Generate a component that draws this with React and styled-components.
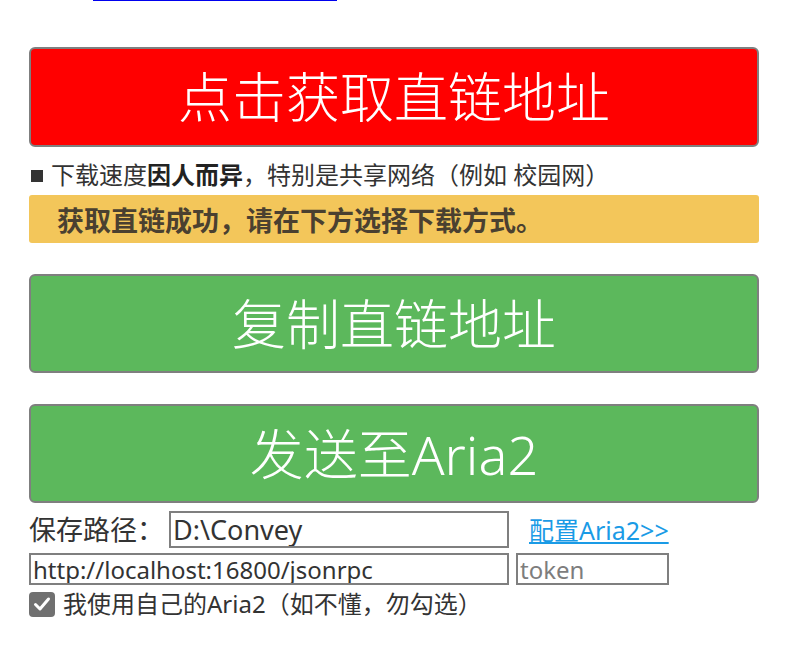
import React from "react";
import styled, { createGlobalStyle } from "styled-components";

const Global = createGlobalStyle`
  html, body { margin: 0; padding: 0; background: #fff; }
  body { font-family: "Noto Sans", "Noto Sans CJK SC", sans-serif; color: #333; }
`;

const Page = styled.div`
  width: 730px;
  padding-left: 29px;
  display: flex;
  flex-direction: column;
`;

const TopLink = styled.a`
  display: block;
  margin: -20px 0 0 64px;
  height: 24px;
  line-height: 22px;
  font-size: 20px;
  color: #0000ee;
  text-decoration: underline;
  white-space: nowrap;
  width: 244px;
  overflow: hidden;
`;

const BigButton = styled.button`
  box-sizing: border-box;
  width: 730px;
  height: ${(p) => p.$h || 100}px;
  margin-top: ${(p) => p.$mt}px;
  border: 2px solid #7f7f7f;
  border-radius: 6px;
  background: ${(p) => p.$bg};
  color: #fff;
  font-family: "Noto Sans", "Noto Sans CJK SC", sans-serif;
  font-weight: 300;
  font-size: 54px;
  line-height: 1;
  padding: 0;
  display: flex;
  align-items: center;
  justify-content: center;
  cursor: pointer;
`;

const Note = styled.div`
  margin-top: 13px;
  height: 30px;
  line-height: 30px;
  font-size: 24px;
  color: #333;
  display: flex;
  align-items: center;
  white-space: nowrap;
  b { font-weight: 700; color: #222; }
`;

const Square = styled.span`
  display: inline-block;
  width: 12px;
  height: 12px;
  background: #333;
  margin: 2px 8px 0 2px;
`;

const Alert = styled.div`
  box-sizing: border-box;
  margin-top: 5px;
  height: 48px;
  border-radius: 3px;
  background: #f3c65a;
  color: #4a4030;
  font-weight: 700;
  font-size: 27px;
  padding-left: 28px;
  display: flex;
  align-items: center;
  white-space: nowrap;
`;

const Row = styled.div`
  display: flex;
  align-items: center;
  margin-top: ${(p) => p.$mt}px;
`;

const Label = styled.span`
  font-size: 27px;
  line-height: 37px;
  color: #333;
  width: 140px;
  white-space: nowrap;
`;

const Input = styled.input`
  box-sizing: border-box;
  width: ${(p) => p.$w}px;
  height: ${(p) => p.$h}px;
  margin: 0 0 0 ${(p) => p.$ml || 0}px;
  border: 2px solid #7f7f7f;
  padding: 0 2px;
  font-family: "Noto Sans", "Noto Sans CJK SC", sans-serif;
  font-size: ${(p) => p.$fs}px;
  color: #333;
  outline: none;
  &::placeholder { color: #7d7d7d; }
`;

const ConfigLink = styled.a`
  margin-left: 20px;
  font-size: 25px;
  line-height: 30px;
  color: #1a9be6;
  text-decoration: underline;
  white-space: nowrap;
`;

const CheckRow = styled.label`
  display: flex;
  align-items: center;
  margin-top: 6px;
  height: 26px;
  line-height: 26px;
  font-size: 24px;
  color: #333;
  white-space: nowrap;
`;

const Box = styled.span`
  width: 26px;
  height: 25px;
  border-radius: 4px;
  background: #707070;
  display: flex;
  align-items: center;
  justify-content: center;
  margin-right: 8px;
`;

export default function App() {
  return (
    <>
      <Global />
      <Page>
        <TopLink href="#">已经是最新版本了，点击刷新</TopLink>
        <BigButton $bg="#ff0000" $mt={43}>点击获取直链地址</BigButton>
        <Note>
          <Square />
          下载速度<b>因人而异</b>，特别是共享网络（例如 校园网）
        </Note>
        <Alert>获取直链成功，请在下方选择下载方式。</Alert>
        <BigButton $bg="#5cb85c" $mt={31} $h={99}>复制直链地址</BigButton>
        <BigButton $bg="#5cb85c" $mt={31} $h={99}>发送至Aria2</BigButton>
        <Row $mt={8}>
          <Label>保存路径：</Label>
          <Input $w={340} $h={37} $fs={27} defaultValue="D:\Convey" />
          <ConfigLink href="#">配置Aria2&gt;&gt;</ConfigLink>
        </Row>
        <Row $mt={5}>
          <Input $w={480} $h={32} $fs={24} defaultValue="http://localhost:16800/jsonrpc" />
          <Input $w={153} $h={32} $fs={24} $ml={7} placeholder="token" />
        </Row>
        <CheckRow>
          <Box>
            <svg width="18" height="16" viewBox="0 0 18 16">
              <path d="M2.5 8.5 L7 13 L15.5 3" fill="none" stroke="#fff" strokeWidth="3" strokeLinecap="round" strokeLinejoin="round" />
            </svg>
          </Box>
          我使用自己的Aria2（如不懂，勿勾选）
        </CheckRow>
      </Page>
    </>
  );
}
